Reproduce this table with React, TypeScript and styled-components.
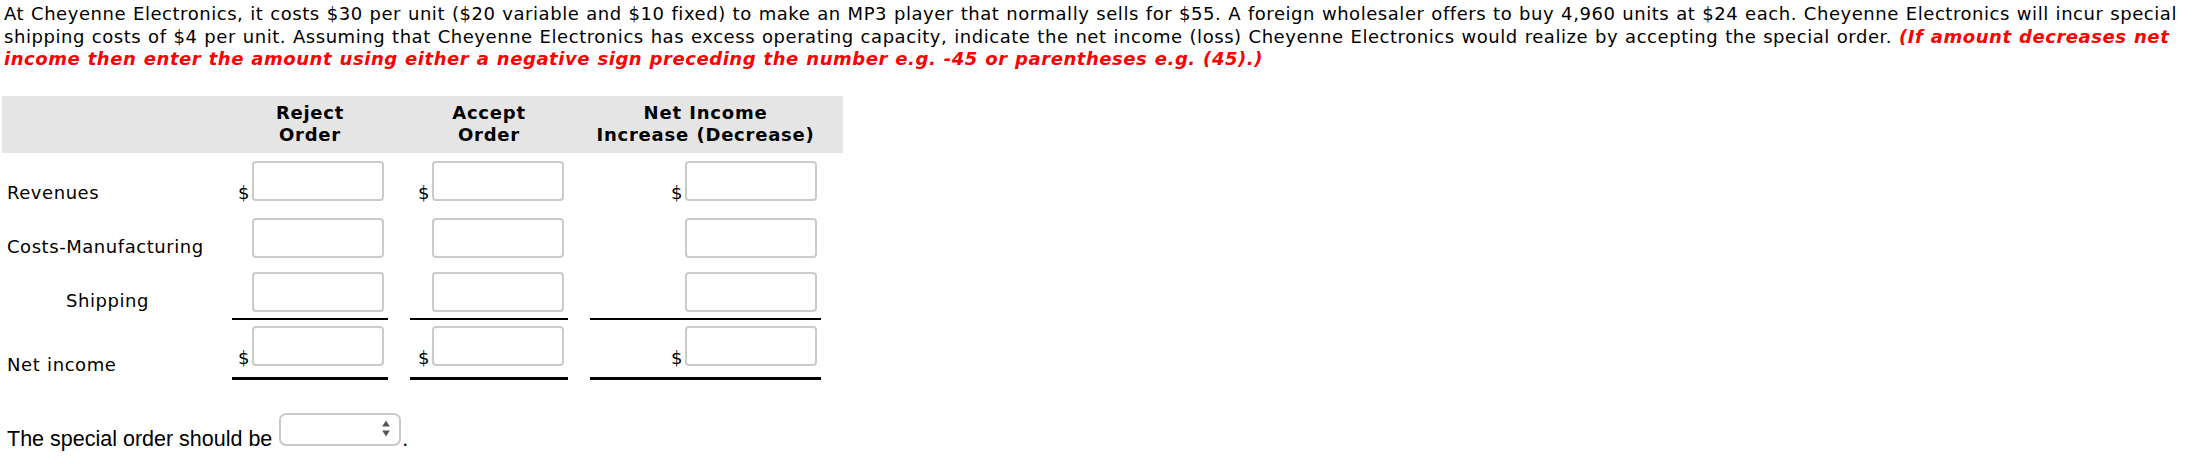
import styled, { createGlobalStyle } from 'styled-components';

const GlobalStyle = createGlobalStyle`
  html,
  body {
    margin: 0;
    padding: 0;
    background: #ffffff;
  }
  body {
    font-family: 'DejaVu Sans', Verdana, sans-serif;
    color: #000000;
  }
`;

const COLUMNS = '208px 156px 158px 231px';

type Line = {
  label: string;
  indent: number;
  lift: number;
  top: number;
  pad: number;
  rule: number;
  dollar: boolean;
};

const lines: Line[] = [
  { label: 'Revenues', indent: 5, lift: 0, top: 8, pad: 0, rule: 0, dollar: true },
  { label: 'Costs-Manufacturing', indent: 5, lift: 3, top: 17, pad: 0, rule: 0, dollar: false },
  { label: 'Shipping', indent: 64, lift: 11, top: 14, pad: 6, rule: 2, dollar: false },
  { label: 'Net income', indent: 5, lift: 7, top: 6, pad: 11, rule: 3, dollar: true },
];

const headings = [
  ['Reject', 'Order'],
  ['Accept', 'Order'],
  ['Net Income', 'Increase (Decrease)'],
];

export default function App() {
  return (
    <Page>
      <GlobalStyle />
      <Question>
        At Cheyenne Electronics, it costs $30 per unit ($20 variable and $10 fixed) to make an MP3 player that
        normally sells for $55. A foreign wholesaler offers to buy 4,960 units at $24 each. Cheyenne Electronics
        will incur special
        <br />
        shipping costs of $4 per unit. Assuming that Cheyenne Electronics has excess operating capacity, indicate
        the net income (loss) Cheyenne Electronics would realize by accepting the special order.{' '}
        <Hint>
          (If amount decreases net
          <br />
          income then enter the amount using either a negative sign preceding the number e.g. -45 or parentheses
          e.g. (45).)
        </Hint>
      </Question>

      <Sheet>
        <HeaderRow>
          <span />
          {headings.map((h) => (
            <HeadCell key={h[1] + h[0]}>
              {h[0]}
              <br />
              {h[1]}
            </HeadCell>
          ))}
        </HeaderRow>

        {lines.map((line) => (
          <Row key={line.label} $top={line.top}>
            <Label $indent={line.indent} $lift={line.lift}>
              {line.label}
            </Label>
            {[0, 1, 2].map((col) => (
              <Amount key={col} $pad={line.pad} $rule={line.rule}>
                {line.dollar && <Dollar>$</Dollar>}
                <Field type="text" />
              </Amount>
            ))}
          </Row>
        ))}
      </Sheet>

      <Verdict>
        The special order should be
        <Picker>
          <Select defaultValue="">
            <option value="" />
            <option value="accepted">accepted</option>
            <option value="rejected">rejected</option>
          </Select>
          <Arrows width="10" height="18" viewBox="0 0 10 18">
            <path d="M5 0.5 L8.8 6.5 L1.2 6.5 Z" />
            <path d="M1.2 10.5 L8.8 10.5 L5 16.5 Z" />
          </Arrows>
        </Picker>
        <Stop>.</Stop>
      </Verdict>
    </Page>
  );
}

const Page = styled.div`
  width: 2208px;
  height: 464px;
  padding-left: 2px;
  box-sizing: border-box;
  overflow: hidden;
  letter-spacing: 0.55px;
  word-spacing: 0.6px;
`;

const Question = styled.p`
  margin: 3px 0 0;
  padding-left: 2px;
  font-size: 18px;
  line-height: 22.5px;
  white-space: nowrap;
`;

const Hint = styled.strong`
  color: #ff0000;
  font-style: italic;
  font-weight: bold;
  letter-spacing: 0.55px;
`;

const Sheet = styled.div`
  margin-top: 25.5px;
  width: 841px;
`;

const HeaderRow = styled.div`
  display: grid;
  grid-template-columns: ${COLUMNS};
  column-gap: 22px;
  padding: 6px 22px 6px 0;
  background: #e5e5e5;
`;

const HeadCell = styled.div`
  text-align: center;
  font-size: 18px;
  font-weight: bold;
  line-height: 22.4px;
  letter-spacing: 0.75px;
  white-space: nowrap;
`;

const Row = styled.div<{ $top: number }>`
  display: grid;
  grid-template-columns: ${COLUMNS};
  column-gap: 22px;
  margin-top: ${(p) => p.$top}px;
`;

const Label = styled.div<{ $indent: number; $lift: number }>`
  display: flex;
  align-items: flex-end;
  padding-left: ${(p) => p.$indent}px;
  padding-bottom: ${(p) => p.$lift}px;
  font-size: 18px;
  line-height: 16px;
  white-space: nowrap;
`;

const Amount = styled.div<{ $pad: number; $rule: number }>`
  display: flex;
  justify-content: flex-end;
  align-items: flex-end;
  padding: 0 4px ${(p) => p.$pad}px 0;
  border-bottom: ${(p) => p.$rule}px solid #000000;
`;

const Dollar = styled.span`
  margin-right: 2px;
  font-size: 18px;
  line-height: 16px;
`;

const Field = styled.input`
  width: 132px;
  height: 40px;
  box-sizing: border-box;
  margin: 0;
  padding: 0 6px;
  border: 2px solid #cbcbcb;
  border-radius: 4px;
  background: #ffffff;
  font: inherit;
  outline: none;
`;

const Verdict = styled.div`
  display: flex;
  align-items: flex-end;
  margin-top: 33px;
  padding-left: 5px;
  font-family: 'Liberation Sans', Arial, sans-serif;
  font-size: 21.5px;
  line-height: 13px;
  letter-spacing: 0;
  word-spacing: 0;
  white-space: nowrap;
`;

const Picker = styled.span`
  position: relative;
  display: inline-block;
  flex: none;
  margin-left: 7px;
`;

const Select = styled.select`
  display: block;
  width: 122px;
  height: 33px;
  margin: 0;
  padding: 0 24px 0 8px;
  box-sizing: border-box;
  border: 2px solid #c9c9c9;
  border-radius: 7px;
  background: #ffffff;
  appearance: none;
  font: inherit;
  font-size: 16px;
  line-height: normal;
  color: #000000;
  outline: none;
`;

const Arrows = styled.svg`
  position: absolute;
  top: 7px;
  left: 102px;
  fill: #555555;
  pointer-events: none;
`;

const Stop = styled.span`
  margin-left: 1px;
`;
